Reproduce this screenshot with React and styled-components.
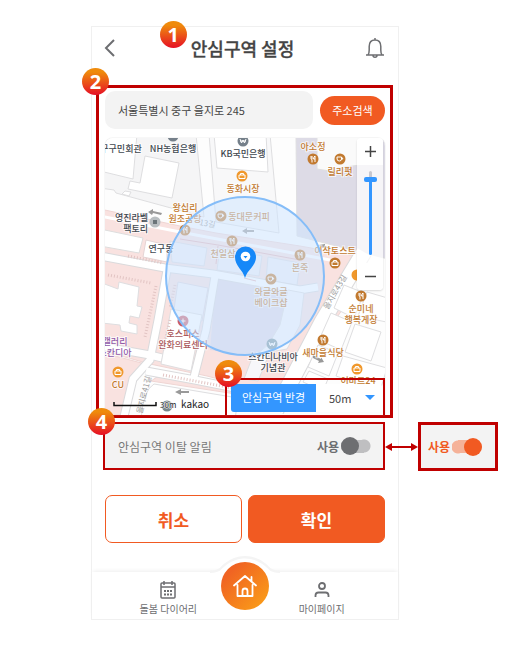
import React, { useState } from "react";
import styled, { createGlobalStyle } from "styled-components";

const RED = "#c00000";
const ORANGE = "#f15a22";
const BLUE = "#3396ff";

const GlobalStyle = createGlobalStyle`
  * { box-sizing: border-box; }
  body {
    margin: 0;
    background: #fff;
    font-family: "Noto Sans CJK KR", "Noto Sans", sans-serif;
    color: #444;
  }
  button, input, select { font-family: inherit; margin: 0; }
`;

const Page = styled.div`
  display: grid;
  grid-template-columns: minmax(0, 1fr) 80px;
  column-gap: 19px;
  align-items: start;
  padding: 26px 30px 25px 91px;
`;

const Phone = styled.main`
  border: 1px solid #f0f0f0;
  background: #fff;
`;

const Badge = styled.span`
  position: absolute;
  z-index: 3;
  top: ${(p) => p.$top}px;
  left: ${(p) => p.$left}px;
  display: grid;
  place-items: center;
  width: 27px;
  height: 27px;
  border-radius: 50%;
  background: linear-gradient(#ef8b0c 15%, #ea4a1a 60%, #e60f25);
  color: #fff;
  font: 700 20px/27px "Open Sans", sans-serif;
`;

const Header = styled.header`
  display: flex;
  align-items: center;
  justify-content: space-between;
  height: 42px;
  padding: 0 13px 0 8px;
`;

const TitleWrap = styled.div`
  position: relative;
`;

const Title = styled.h1`
  margin: 0;
  font-size: 18px;
  line-height: 26px;
  font-weight: 500;
  -webkit-text-stroke: 0.3px #444;
`;

const IconButton = styled.button`
  display: grid;
  place-items: center;
  width: 20px;
  height: 26px;
  padding: 0;
  border: 0;
  background: none;
  color: #6d6e71;
`;

const AreaFrame = styled.section`
  position: relative;
  margin: 16px 5px 0 4px;
  padding: 3px 5px 0 6px;
  border: 3px solid ${RED};
`;

const SearchRow = styled.form`
  display: flex;
  align-items: center;
  gap: 7px;
`;

const AddressInput = styled.input`
  flex: 1;
  min-width: 0;
  height: 38px;
  padding: 0 13px;
  border: 0;
  border-radius: 10px;
  background: #f3f3f3;
  color: #444;
  font-size: 11px;
`;

const SearchButton = styled.button`
  width: 65px;
  height: 29px;
  padding: 0;
  border: 0;
  border-radius: 15px;
  background: ${ORANGE};
  color: #fff;
  font-size: 11px;
`;

const MapBox = styled.div`
  position: relative;
  height: 277px;
  margin-top: 9px;
`;

const MapSvg = styled.svg`
  display: block;
  width: 100%;
  height: 100%;
  border-radius: 8px 8px 0 0;
  box-shadow: 0 0 1px #aaa;
  font-family: "Noto Sans CJK KR", sans-serif;
`;

const ZoomPanel = styled.div`
  position: absolute;
  top: 0;
  right: 2px;
  display: flex;
  flex-direction: column;
  align-items: center;
  width: 26px;
  border-radius: 4px;
  background: rgba(255, 255, 255, 0.72);
  box-shadow: 0 1px 2px rgba(0, 0, 0, 0.15);
  overflow: hidden;
`;

const ZoomButton = styled.button`
  display: grid;
  place-items: center;
  width: 100%;
  height: 27px;
  padding: 0;
  border: 0;
  background: #fff;
  color: #444;
`;

const ZoomRange = styled.input`
  appearance: none;
  writing-mode: vertical-lr;
  direction: rtl;
  width: 14px;
  height: 84px;
  margin: 6px 0 8px;
  background: transparent;
  &::-webkit-slider-runnable-track {
    width: 3px;
    border-radius: 2px;
    background: linear-gradient(#c8c8d0 10%, ${BLUE} 10%);
  }
  &::-webkit-slider-thumb {
    appearance: none;
    width: 13px;
    height: 5px;
    margin-right: -5px;
    margin-left: -5px;
    border-radius: 2px;
    background: ${BLUE};
  }
`;

const RadiusFrame = styled.div`
  position: absolute;
  right: 0;
  bottom: 0;
  width: 160px;
  padding: 4px 1px 3px 4px;
  border: 2px solid ${RED};
  border-bottom-width: 0;
`;

const RadiusPicker = styled.div`
  display: flex;
  height: 28px;
  background: #fff;
  border-radius: 3px;
  overflow: hidden;
`;

const RadiusLabel = styled.label`
  width: 85px;
  background: ${BLUE};
  color: #fff;
  font-size: 11px;
  line-height: 27px;
  text-align: center;
`;

const SelectWrap = styled.div`
  position: relative;
  flex: 1;
  svg { position: absolute; right: 7px; top: 11px; pointer-events: none; }
`;

const RadiusSelect = styled.select`
  appearance: none;
  width: 100%;
  height: 27px;
  padding: 0 13px;
  border: 0;
  background: transparent;
  color: #444;
  font-size: 11px;
`;

const AlertFrame = styled.section`
  position: relative;
  display: flex;
  align-items: center;
  justify-content: space-between;
  height: 48px;
  margin: 4px 13px 0 11px;
  padding: 0 12px 0 13px;
  border: 2px solid ${RED};
  background: #f3f3f3;
`;

const AlertText = styled.span`
  color: #777;
  font-size: 12px;
`;

const SwitchLabel = styled.label`
  display: flex;
  align-items: center;
  gap: 2px;
  color: ${(p) => (p.$on ? ORANGE : "#6d6e71")};
  font-size: 12px;
  font-weight: 700;
`;

const SwitchInput = styled.input`
  appearance: none;
  display: flex;
  align-items: center;
  justify-content: flex-start;
  width: 30px;
  height: 18px;
  margin: 0;
  background: radial-gradient(circle at 6px 50%, ${(p) => p.$track} 6px, transparent 7px),
    radial-gradient(circle at 23px 50%, ${(p) => p.$track} 6px, transparent 7px),
    linear-gradient(${(p) => p.$track}, ${(p) => p.$track}) 6px center / 17px 13px no-repeat;
  &::before {
    content: "";
    width: 18px;
    height: 18px;
    border-radius: 50%;
    background: #6d6e71;
  }
  &:checked { justify-content: flex-end; }
  &:checked::before { background: ${ORANGE}; }
`;

const Actions = styled.div`
  display: grid;
  grid-template-columns: 1fr 1fr;
  gap: 6px;
  margin: 25px 13px 0;
`;

const ActionButton = styled.button`
  height: 48px;
  padding: 0;
  border: 1px solid ${ORANGE};
  border-radius: 7px;
  background: ${(p) => (p.$primary ? ORANGE : "#fff")};
  color: ${(p) => (p.$primary ? "#fff" : ORANGE)};
  font-size: 17px;
  font-weight: 700;
`;

const Nav = styled.nav`
  position: relative;
  display: grid;
  grid-template-columns: repeat(3, 1fr);
  height: 47px;
  margin-top: 29px;
  padding: 0 38px;
  background: #fff;
  box-shadow: 0 -2px 4px -1px #eee;
`;

const NavLink = styled.a`
  position: relative;
  z-index: 1;
  display: flex;
  flex-direction: column;
  align-items: center;
  gap: 3px;
  padding-top: 9px;
  color: #6d6e71;
  font-size: 10px;
  line-height: 14px;
  text-decoration: none;
  white-space: nowrap;
`;

const HomeLink = styled.a`
  z-index: 1;
  display: grid;
  place-items: center;
  justify-self: center;
  width: 48px;
  height: 48px;
  margin-top: -10px;
  border-radius: 50%;
  background: linear-gradient(135deg, #f06423 20%, #fa9b18 90%);
`;

const NavHump = styled.svg`
  position: absolute;
  top: -16px;
  left: 50%;
  width: 70px;
  margin-left: -35px;
`;

const Aside = styled.aside`
  position: relative;
  display: flex;
  align-items: center;
  justify-content: center;
  height: 49px;
  margin-top: 396px;
  padding-right: 6px;
  border: 3px solid ${RED};
  background: #f3f3f3;
`;

const Arrow = styled.svg`
  position: absolute;
  top: 17px;
  left: -36px;
`;

const food = "#c27a30";
const mart = "#f0982c";
const violet = "#925aa8";
const places = [
  { lines: ["구구민회관"], x: 121, y: 152 },
  { lines: ["NH농협은행"], x: 173, y: 152, pin: "#75808a", px: 173, py: 136 },
  { lines: ["KB국민은행"], x: 243, y: 157, pin: "#75808a", px: 243, py: 141, mark: "w" },
  { lines: ["동화시장"], x: 243, y: 192, color: food, pin: mart, px: 242, py: 176, mark: "bag" },
  { lines: ["아소정"], x: 313, y: 150, color: food, pin: food, px: 313, py: 159, mark: "fork" },
  { lines: ["릴리펏"], x: 340, y: 175, color: food, pin: food, px: 340, py: 159, mark: "cup" },
  { lines: ["영진라벨", "팩토리"], x: 132, y: 221, end: 148 },
  { lines: ["왕십리", "원조곰탕"], x: 185, y: 211, color: food, pin: food, px: 185, py: 230, mark: "fork" },
  { lines: ["연구동"], x: 161, y: 252 },
  { lines: ["동대문커피"], x: 249, y: 220, color: food, pin: food, px: 221, py: 216, mark: "cup" },
  { lines: ["천일삼"], x: 223, y: 257, color: food, pin: food, px: 232, py: 241, mark: "fork" },
  { lines: ["본죽"], x: 300, y: 271, color: food, pin: food, px: 300, py: 255, mark: "fork" },
  { lines: ["이삭토스트"], x: 335, y: 254, color: food, pin: food, px: 335, py: 263, mark: "bag" },
  { lines: ["와글와글", "베이크샵"], x: 271, y: 295, color: food, pin: food, px: 271, py: 279, mark: "cup" },
  { lines: ["호스피스", "완화의료센터"], x: 183, y: 337, color: "#a9575b", pin: "#cb5c68", px: 183, py: 321, mark: "plus" },
  { lines: ["갤러리", "스칸디아"], x: 115, y: 345, color: violet },
  { lines: ["CU"], x: 118, y: 388, color: food, pin: mart, px: 118, py: 372, mark: "bag" },
  { lines: ["스칸디나비아", "기념관"], x: 273, y: 360, pin: "#78949f", px: 272, py: 344, mark: "w" },
  { lines: ["새마을식당"], x: 323, y: 356, color: food, pin: food, px: 323, py: 340, mark: "fork" },
  { lines: ["순미네", "행복게장"], x: 361, y: 312, color: food, pin: food, px: 361, py: 296, mark: "fork" },
  { lines: ["이마트24"], x: 358, y: 384, color: food, pin: mart, px: 357, py: 369, mark: "bag" },
];

const marks = {
  fork: "M-2 -3v2.500q0 1 1 1v3M-1 -3v3M2 3v-6q-1.500 1-1.500 3H2",
  cup: "M-3 -2h4.500v2q0 2-2.200 2t-2.200-2zM1.500 -1q2-.5 1 1.200l-1 .3",
  bag: "M-3 -1h6v3.500h-6zM-1.500 -1v-1.500h3v1.500",
  plus: "M-2.500 0h5M0 -2.500v5",
  w: "M-3 -2l1.500 4L0 -1l1.500 3L3 -2M-3 0h6",
};

function Place({ place }) {
  const x = place.end || place.x;
  return (
    <g>
      {place.pin && (
        <g transform={`translate(${place.px} ${place.py})`}>
          <circle r="5.5" fill={place.pin} />
          {place.mark && <path d={marks[place.mark]} fill="none" stroke="#fff" />}
        </g>
      )}
      <text
        textAnchor={place.end ? "end" : "middle"}
        fontSize="9"
        fontWeight="500"
        fill={place.color || "#3f4850"}
        stroke="#fff"
        strokeWidth="2"
        strokeOpacity="0.7"
        paintOrder="stroke"
      >
        {place.lines.map((line, i) => (
          <tspan key={line} x={x} y={place.y + i * 11}>{line}</tspan>
        ))}
      </text>
    </g>
  );
}

function StreetMap() {
  return (
    <MapSvg viewBox="105 138 280 277" preserveAspectRatio="xMidYMid slice" role="img" aria-label="안심구역 지도">
      <rect x="0" y="100" width="528" height="360" fill="#fdfdfd" />
      {/* city blocks */}
      <g stroke="#dedee0">
        <path d="M100 134H196L204 217L116 193L114 190L100 188z" fill="#f5f5f6" />
        <path d="M100 134H137L133 179L100 171z" fill="#fff" />
        <path d="M145 156L179 163L172 198L128 189L130 181L140 183z" fill="#fff" />
        <path d="M125 191l6 1-2 4-7-2z" fill="#fff" />
        <path d="M209 134H270L279 233L216 222z" fill="#f8f8f9" />
        <path d="M214 134H266L268 172L217 168z" fill="#fff" />
        <path d="M296 134H400V262L297 236z" fill="#dddbe6" />
        <path d="M317 134H360V165L337 168l-1 4-19-3z" fill="#fafafa" />
      </g>
      {/* hospital and market grounds */}
      <g fill="#f9e2e0" stroke="#efd5d3">
        <path d="M100 209L180 226L216 233L300 246L356 256L342 310L302 368L285 390L237 384L207 376L150 364L100 350z" />
        <path d="M100 352L149 365L137 377L126 415H100z" />
        <path d="M157 377L275 391V400L151 381z" />
      </g>
      <path d="M100 216L180 232L330 260" fill="none" stroke="#fff" strokeWidth="3" />
      <path d="M100 229L143 238L139 253L100 246z" fill="#fff" stroke="#ddd" />
      <path d="M146 240L167 245V262L143 257z" fill="#fff" stroke="#e4d4d4" />
      <path d="M170 241L207 248L204 266L172 262zM220 248L262 256L259 276L217 270zM268 257l32 6-3 22-31-5z" fill="#eff0f5" stroke="#dcdce2" />
      <path d="M216 278L288 292L282 325L258 356L210 350z" fill="#e0dae6" />
      <path d="M178 282l30 6-6 33-29-5z" fill="#f4f4f8" stroke="#dcd8e0" />
      {/* streets */}
      <g fill="none" stroke="#dadadc" strokeWidth="9">
        <path d="M100 256L165 268L213 274L300 290L318 287" />
        <path d="M167 270L158 320L150 360L133 379L122 425" />
        <path d="M215 276L206 330L194 377" />
        <path d="M105 347L150 355L162 358M146 371L195 380L240 389" />
        <path d="M364 252L322 322L276 410" strokeWidth="17" />
      </g>
      <g fill="none" stroke="#fff" strokeWidth="7">
        <path d="M100 256L165 268L213 274L300 290L318 287" />
        <path d="M167 270L158 320L150 360L133 379L122 425" />
        <path d="M215 276L206 330L194 377" />
        <path d="M105 347L150 355L162 358M146 371L195 380L240 389" />
        <path d="M364 252L322 322L276 410" strokeWidth="15" />
      </g>
      {/* individual buildings */}
      <g fill="#fff" stroke="#dedee0">
        <path d="M102 283L118 289L119 282L139 287L137 306L142 307L139 318L130 316L129 323L137 325V334L121 331L120 325L102 323z" />
        <path d="M171 309L202 315L191 371L161 364z" />
        <path d="M154 384L238 398L235 420H141q2-30 13-36z" />
        <path d="M288 290L304 293L300 325L287 349L270 352L258 381L244 379L252 358L268 345L280 325z" fill="#f7f7fa" />
        <path d="M344 285l20 8-10 25-20-10zM367 292l24 7v24l-33-7zM331 313l21 9-11 28-22-10zM355 324l26 8-10 29-26-9zM318 345l20 8-9 23-21-9zM343 356l44 12-7 23-44-15zM309 371l19 8-5 12-20-9z" />
      </g>
      <g stroke="#e2c4c3" strokeWidth="3" strokeDasharray="1 2" fill="none">
        <path d="M108 275L151 283M156 286L145 337M128 256L163 263M163 375L232 388M175 285L170 308M170 320L163 350" />
      </g>
      <g fill="none" stroke="#e3b4b5">
        <path d="M180 239L218 245L300 260M218 246l-2 18M244 278l12 3" />
      </g>
      <path d="M148 212l5-3v2l9 2-1 2-8-2-1 2zM242 231l5-3v2h7v2h-7v2zM175 392l6-3v2h8v2h-8v2zM313 355l8 4v-2l3 5-6 1 1-2-6-3zM319 245l6-1v2l6 2-1 1-6-2-1 1z" fill="#999" />
      <g fill="#999" fontSize="8">
        <text transform="translate(199 225) rotate(10)">13길</text>
        <text transform="translate(328 310) rotate(-60)">을지로43길</text>
        <text transform="translate(142 414) rotate(-76)">을지로41길</text>
      </g>
      <circle cx="155" cy="222" r="5.500" fill="#b9bec1" />
      <rect x="153" y="220" width="4" height="4" fill="#6b7479" />
      <circle cx="357" cy="275" r="5.500" fill={mart} />
      <circle cx="167" cy="406" r="5.500" fill="#78878c" />
      {places.map((place) => <Place key={place.lines[0]} place={place} />)}
      {/* safe zone */}
      <circle cx="245" cy="276" r="79" fill="#cfe5ff" fillOpacity="0.55" stroke="#85bdf8" strokeWidth="2" />
      <path d="M245 278C243 270 235 266 235 257a10.500 10.500 0 0 1 21 0C256 266 247 270 245 278z" fill="#1688f8" />
      <circle cx="245.500" cy="256.500" r="4.800" fill="#fff" />
      <path d="M243.500 256h4l-2 2.500z" fill="#1688f8" />
      {/* scale */}
      <path d="M114 402V405.500H156V402" fill="none" stroke="#111" strokeWidth="1.500" />
      <g fill="#222" stroke="#fff" strokeWidth="1" paintOrder="stroke">
        <text x="160" y="408" fontSize="8">30m</text>
        <text x="181" y="408" fontSize="10">kakao</text>
      </g>
    </MapSvg>
  );
}

function Toggle({ id, defaultOn }) {
  const [on, setOn] = useState(defaultOn);
  return (
    <SwitchLabel htmlFor={id} $on={on}>
      사용
      <SwitchInput
        id={id}
        type="checkbox"
        role="switch"
        $track={on ? "#f5b299" : "#bfbfc1"}
        checked={on}
        onChange={() => setOn(!on)}
      />
    </SwitchLabel>
  );
}

export default function App() {
  const [zoom, setZoom] = useState(92);
  return (
    <>
      <GlobalStyle />
      <Page>
        <Phone>
          <Header>
            <IconButton aria-label="뒤로">
              <svg width="12" height="18" viewBox="0 0 12 18" fill="none" stroke="currentColor" strokeWidth="2">
                <path d="M10 1L2 9l8 8" />
              </svg>
            </IconButton>
            <TitleWrap>
              <Badge $top={-14} $left={-31}>1</Badge>
              <Title>안심구역 설정</Title>
            </TitleWrap>
            <IconButton aria-label="알림">
              <svg width="20" height="22" viewBox="0 0 20 22" fill="none" stroke="currentColor" strokeWidth="1.500">
                <path d="M10 1v2M1 18h18M3 18c1.200-1.500 1.200-3 1.200-5V9.500C4.200 5.500 6.500 3 10 3s5.800 2.500 5.800 6.500V13c0 2 0 3.500 1.200 5M8 18.500c0 2.300 4 2.300 4 0" />
              </svg>
            </IconButton>
          </Header>

          <AreaFrame>
            <Badge $top={-20} $left={-17}>2</Badge>
            <SearchRow onSubmit={(e) => e.preventDefault()}>
              <AddressInput aria-label="주소" defaultValue="서울특별시 중구 을지로 245" />
              <SearchButton type="submit">주소검색</SearchButton>
            </SearchRow>
            <MapBox>
              <StreetMap />
              <ZoomPanel>
                <ZoomButton aria-label="확대" onClick={() => setZoom(Math.min(100, zoom + 10))}>
                  <svg width="11" height="11" stroke="currentColor" strokeWidth="1.500"><path d="M0 5.500h11M5.500 0v11" /></svg>
                </ZoomButton>
                <ZoomRange aria-label="지도 배율" type="range" value={zoom} onChange={(e) => setZoom(+e.target.value)} />
                <ZoomButton aria-label="축소" onClick={() => setZoom(Math.max(0, zoom - 10))}>
                  <svg width="11" height="11" stroke="currentColor" strokeWidth="1.500"><path d="M0 5.500h11" /></svg>
                </ZoomButton>
              </ZoomPanel>
              <RadiusFrame>
                <Badge $top={-20} $left={-12}>3</Badge>
                <RadiusPicker>
                  <RadiusLabel htmlFor="radius">안심구역 반경</RadiusLabel>
                  <SelectWrap>
                    <RadiusSelect id="radius"><option>50m</option></RadiusSelect>
                    <svg width="10" height="6"><path d="M0 0h10L5 5z" fill={BLUE} /></svg>
                  </SelectWrap>
                </RadiusPicker>
              </RadiusFrame>
            </MapBox>
          </AreaFrame>

          <AlertFrame>
            <Badge $top={-16} $left={-17}>4</Badge>
            <AlertText>안심구역 이탈 알림</AlertText>
            <Toggle id="leave-alert" defaultOn={false} />
          </AlertFrame>

          <Actions>
            <ActionButton>취소</ActionButton>
            <ActionButton $primary>확인</ActionButton>
          </Actions>

          <Nav>
            <NavHump height="34" viewBox="0 0 70 34">
              <path d="M0 16C10 16 11 12 15 9C27 -1 43 -1 55 9C59 12 60 16 70 16" fill="none" stroke="#f4f4f4" strokeWidth="3" />
              <path d="M0 17C10 17 11 13 15 10C27 0 43 0 55 10C59 13 60 17 70 17V34H0z" fill="#fff" />
            </NavHump>
            <NavLink href="#diary">
              <svg width="16" height="18" viewBox="0 0 16 18" fill="none" stroke="currentColor" strokeWidth="1.500">
                <rect x="1" y="2" width="14" height="15" rx="1" />
                <path d="M4 0v4M12 0v4M1 6h14" />
                <path d="M4 10h8M4 13.500h8" strokeWidth="2" strokeDasharray="2 1" />
              </svg>
              돌봄 다이어리
            </NavLink>
            <HomeLink href="#home" aria-label="홈">
              <svg width="24" height="22" viewBox="0 0 24 22" fill="none" stroke="#fff" strokeWidth="1.800" strokeLinecap="round" strokeLinejoin="round">
                <path d="M1 10.500L12 1l11 9.500M4.500 10v11h15V10M18.500 6V2M9.500 21v-5a2.500 2.500 0 0 1 5 0v5" />
              </svg>
            </HomeLink>
            <NavLink href="#mypage">
              <svg width="16" height="18" viewBox="0 0 16 18" fill="none" stroke="currentColor" strokeWidth="1.800">
                <circle cx="8" cy="5" r="3" />
                <path d="M1.500 16v-1.500q0-3 3-3h7q3 0 3 3V16" />
              </svg>
              마이페이지
            </NavLink>
          </Nav>
        </Phone>

        <Aside>
          <Arrow width="33" height="10" viewBox="0 0 33 10">
            <path d="M6 5h21" stroke={RED} strokeWidth="2" />
            <path d="M0 5l7-4v8zM33 5l-7-4v8z" fill={RED} />
          </Arrow>
          <Toggle id="leave-alert-on" defaultOn />
        </Aside>
      </Page>
    </>
  );
}
